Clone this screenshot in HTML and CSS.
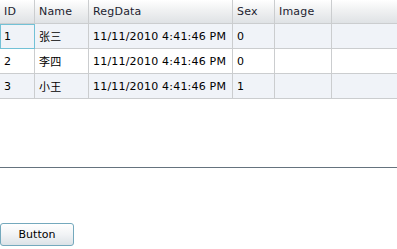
FILE: index.html
```html
<!DOCTYPE html>
<html lang="zh">
<head>
    <meta charset="UTF-8">
    <title>DataGrid</title>
    <link rel="stylesheet" href="styles.css">
</head>
<body>
    <!-- Data grid -->
    <div class="grid-area">
        <div class="grid">
            <div class="cell head">ID</div>
            <div class="cell head">Name</div>
            <div class="cell head">RegData</div>
            <div class="cell head">Sex</div>
            <div class="cell head">Image</div>
            <div class="cell head last"></div>

            <div class="cell alt focus">1</div>
            <div class="cell alt">张三</div>
            <div class="cell alt">11/11/2010 4:41:46 PM</div>
            <div class="cell alt">0</div>
            <div class="cell alt"></div>
            <div class="cell alt last"></div>

            <div class="cell">2</div>
            <div class="cell">李四</div>
            <div class="cell">11/11/2010 4:41:46 PM</div>
            <div class="cell">0</div>
            <div class="cell"></div>
            <div class="cell last"></div>

            <div class="cell alt">3</div>
            <div class="cell alt">小王</div>
            <div class="cell alt">11/11/2010 4:41:46 PM</div>
            <div class="cell alt">1</div>
            <div class="cell alt"></div>
            <div class="cell alt last"></div>
        </div>
    </div>

    <div class="actions">
        <button class="btn">Button</button>
    </div>
</body>
</html>
```

FILE: styles.css
```css
* {
    margin: 0;
    padding: 0;
    box-sizing: border-box;
}

body {
    font-family: "DejaVu Sans", "Noto Sans CJK SC", sans-serif;
    font-size: 11px;
    color: #000;
    background-color: #fff;
}

/* Grid */
.grid-area {
    height: 168px;
    border-bottom: 1px solid #65737e;
}

.grid {
    display: grid;
    grid-template-columns: 35px 54px 144px 42px 57px 1fr;
    grid-template-rows: 24px 25px 25px 25px;
}

.cell {
    display: flex;
    align-items: center;
    padding-left: 4px;
    border-right: 1px solid #cbcdcf;
    border-bottom: 1px solid #cbcdcf;
    background-color: #fff;
    white-space: nowrap;
    letter-spacing: 0.2px;
}

.cell.last {
    border-right: none;
}

.cell.head {
    background-image: linear-gradient(#ffffff, #f0f1f2 45%, #dfe2e5);
    color: #1d1d30;
    padding-bottom: 1px;
}

.cell.alt {
    background-color: #f0f3f8;
}

.cell.focus {
    outline: 1px solid #72c1d6;
    outline-offset: -1px;
}

/* Button */
.actions {
    padding-top: 55px;
}

.btn {
    width: 74px;
    height: 23px;
    font-family: "DejaVu Sans", sans-serif;
    font-size: 11px;
    color: #000;
    border: 1px solid #74a9bd;
    border-radius: 3px;
    background-image: linear-gradient(#ffffff, #f1f3f5 50%, #dce2e7);
}
```
